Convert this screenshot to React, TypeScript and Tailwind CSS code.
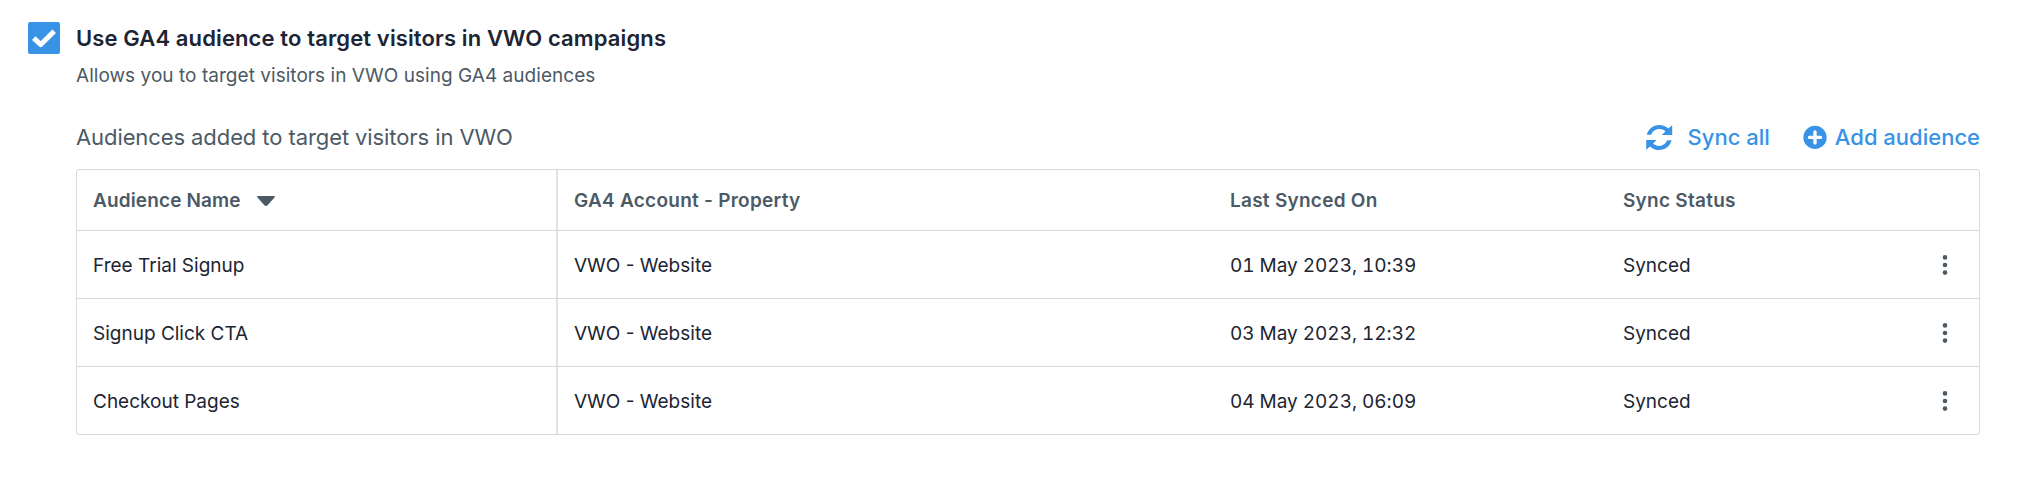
const audiences = [
  { name: 'Free Trial Signup', property: 'VWO - Website', syncedOn: '01 May 2023, 10:39', status: 'Synced' },
  { name: 'Signup Click CTA', property: 'VWO - Website', syncedOn: '03 May 2023, 12:32', status: 'Synced' },
  { name: 'Checkout Pages', property: 'VWO - Website', syncedOn: '04 May 2023, 06:09', status: 'Synced' },
];

const columns = 'grid grid-cols-[481px_656px_393px_1fr_68px]';

const CheckIcon = () => (
  <svg viewBox="0 0 32 32" className="w-8 h-8" fill="none" stroke="white" strokeWidth="5">
    <path d="M5.7 16.2 L12.8 22.6 L26.2 9.2" strokeLinejoin="round" />
  </svg>
);

const SyncIcon = () => (
  <svg viewBox="0 0 28 28" className="w-7 h-7" fill="currentColor">
    <path d="M1.8 11.7 C3.2 6 8.2 2 14.2 2 C17.6 2 20.9 3.2 23.4 5.6 L27.2 2.3 V12 H16.8 L20.4 8.4 C18.7 6.9 16.6 6.1 14.2 6.1 C10.6 6.1 7.5 8.3 6.2 11.7 Z" />
    <path d="M26.6 17.3 C25.2 23 20.2 27 14.2 27 C10.8 27 7.5 25.8 5 23.4 L1.2 26.7 V17 H11.6 L8 20.6 C9.7 22.1 11.8 22.9 14.2 22.9 C17.8 22.9 20.9 20.7 22.2 17.3 Z" />
  </svg>
);

const PlusCircleIcon = () => (
  <svg viewBox="0 0 24 24" className="w-6 h-6">
    <circle cx="12" cy="12.4" r="11.6" fill="currentColor" />
    <path d="M12 6.9 V17.9 M6.5 12.4 H17.5" stroke="white" strokeWidth="3.4" strokeLinecap="round" />
  </svg>
);

const SortIcon = () => (
  <svg viewBox="0 0 18 10" className="w-[18px] h-[10px]" fill="currentColor">
    <path d="M0.8 0 H17.2 Q18.4 0.6 17.5 1.6 L10.6 9.2 Q9 10.6 7.4 9.2 L0.5 1.6 Q-0.4 0.6 0.8 0 Z" />
  </svg>
);

const MoreIcon = () => (
  <svg viewBox="0 0 6 20" className="w-[6px] h-5" fill="currentColor">
    <circle cx="3" cy="2.4" r="2.3" />
    <circle cx="3" cy="10" r="2.3" />
    <circle cx="3" cy="17.6" r="2.3" />
  </svg>
);

export default function App() {
  return (
    <div className="h-[486px] bg-white pl-7 pr-[38px] pt-[22px] font-['Inter',sans-serif] text-[#4c5a66]">
      <div className="flex gap-4">
        <button role="checkbox" aria-checked="true" className="w-8 h-8 shrink-0 rounded-[2px] bg-[#3892e5]">
          <CheckIcon />
        </button>
        <div className="flex-1">
          <h1 className="text-[22px] leading-8 font-semibold tracking-[0.12px] text-[#1d2433]">
            Use GA4 audience to target visitors in VWO campaigns
          </h1>
          <p className="mt-2 text-[19px] leading-7 tracking-[0.04px]">
            Allows you to target visitors in VWO using GA4 audiences
          </p>

          <div className="mt-[31px] flex items-center justify-between text-[22px] leading-8">
            <h2 className="tracking-[-0.09px]">Audiences added to target visitors in VWO</h2>
            <div className="flex items-center gap-[33px] font-medium text-[#3892e5]">
              <button className="flex items-center gap-[15px]">
                <SyncIcon />
                Sync all
              </button>
              <button className="flex items-center gap-2">
                <PlusCircleIcon />
                Add audience
              </button>
            </div>
          </div>

          <div className="mt-4 rounded-[3px] border border-[#d6dade] text-[19px] divide-y divide-[#d6dade]">
            <div className={`${columns} h-[61px] font-semibold tracking-[0.26px]`}>
              <div className="flex items-center gap-4 border-r-2 border-[#dfe3e7] pl-4 pt-[2px] tracking-[0.14px]">
                Audience Name
                <SortIcon />
              </div>
              <div className="flex items-center pl-4 pt-[2px]">GA4 Account - Property</div>
              <div className="flex items-center pl-4 pt-[2px]">Last Synced On</div>
              <div className="flex items-center pl-4 pt-[2px]">Sync Status</div>
              <div />
            </div>
            {audiences.map((audience) => (
              <div key={audience.name} className={`${columns} h-[68px] text-[#1d2433] last:h-[67px]`}>
                <div className="flex items-center border-r-2 border-[#dfe3e7] pl-4 pt-[3px]">{audience.name}</div>
                <div className="flex items-center pl-4 pt-[3px]">{audience.property}</div>
                <div className="flex items-center pl-4 pt-[3px] tabular-nums tracking-[-0.04px]">{audience.syncedOn}</div>
                <div className="flex items-center pl-4 pt-[3px]">{audience.status}</div>
                <button className="flex items-center justify-center text-[#4c5a66]">
                  <MoreIcon />
                </button>
              </div>
            ))}
          </div>
        </div>
      </div>
    </div>
  );
}
